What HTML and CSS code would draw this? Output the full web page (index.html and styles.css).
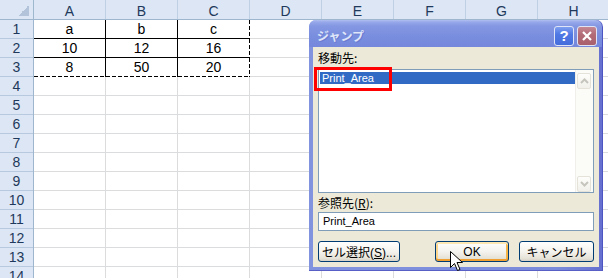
FILE: index.html
```html
<!DOCTYPE html>
<html lang="ja">
<head>
    <meta charset="UTF-8">
    <title>ジャンプ</title>
    <link rel="stylesheet" href="styles.css">
</head>
<body>
    <div class="sheet">
        <div class="corner"></div>
        <div class="col-heads">
            <span>A</span><span>B</span><span>C</span><span>D</span>
            <span>E</span><span>F</span><span>G</span><span>H</span>
        </div>
        <div class="row-heads">
            <span>1</span><span>2</span><span>3</span><span>4</span><span>5</span>
            <span>6</span><span>7</span><span>8</span><span>9</span><span>10</span>
            <span>11</span><span>12</span><span>13</span><span>14</span>
        </div>
        <div class="cells">
            <div class="data">
                <span>a</span><span>b</span><span class="edge-r">c</span>
                <span>10</span><span>12</span><span class="edge-r">16</span>
                <span class="edge-b">8</span><span class="edge-b">50</span><span class="edge-r edge-b">20</span>
            </div>
        </div>
    </div>

    <!-- ジャンプ ダイアログ -->
    <div class="dialog">
        <div class="titlebar">
            <span class="title">ジャンプ</span>
            <span class="tbtn help">?</span>
            <span class="tbtn close">
                <svg width="12" height="12" viewBox="0 0 12 12"><path d="M2 2 L10 10 M10 2 L2 10" stroke="#fff" stroke-width="2.2" fill="none"/></svg>
            </span>
        </div>
        <div class="client">
            <div class="label">移動先:</div>
            <div class="listbox">
                <div class="items">
                    <div class="item selected">Print_Area</div>
                </div>
                <div class="scrollbar">
                    <span class="sbtn">
                        <svg width="9" height="6" viewBox="0 0 9 6"><path d="M1 5 L4.5 1.5 L8 5" stroke="#c6c5bd" stroke-width="2" fill="none"/></svg>
                    </span>
                    <span class="sbtn">
                        <svg width="9" height="6" viewBox="0 0 9 6"><path d="M1 1 L4.5 4.5 L8 1" stroke="#c6c5bd" stroke-width="2" fill="none"/></svg>
                    </span>
                </div>
            </div>
            <div class="label">参照先(<u>R</u>):</div>
            <div class="textbox">Print_Area</div>
            <div class="buttons">
                <button class="btn select">セル選択(<u>S</u>)...</button>
                <button class="btn ok">OK</button>
                <button class="btn cancel">キャンセル</button>
            </div>
            <div class="mark"></div>
        </div>
    </div>

    <svg class="cursor" width="14" height="22" viewBox="0 0 14 22">
        <path d="M0.5 0.5 V16.5 L4.5 12.5 L7.5 19.5 L10 18.5 L7 11.5 H12.5 Z" fill="#fff" stroke="#000" stroke-width="1" stroke-linejoin="miter"/>
    </svg>
</body>
</html>
```

FILE: styles.css
```css
* {
    margin: 0;
    padding: 0;
    box-sizing: border-box;
}

body {
    width: 608px;
    height: 278px;
    overflow: hidden;
    position: relative;
    background: #ffffff;
    font-family: "Liberation Sans", "Noto Sans CJK JP", sans-serif;
    color: #000000;
}

/* シート */
.sheet {
    display: grid;
    grid-template-columns: 34px 576px;
    grid-template-rows: 20px 266px;
}

.corner {
    background: linear-gradient(to top left, #b3c3d9 50%, transparent 50%) right 4px bottom 3px / 11px 11px no-repeat, #dce6f4;
    border-right: 1px solid #9eb6ce;
    border-bottom: 1px solid #9eb6ce;
}

.col-heads {
    display: flex;
    background: #dce6f4;
    border-bottom: 1px solid #9eb6ce;
}

.col-heads span {
    flex: none;
    width: 72px;
    border-right: 1px solid #c0d0e4;
    text-align: center;
    font-size: 14px;
    line-height: 16px;
    padding-top: 3px;
    color: #1e395b;
}

.row-heads {
    display: flex;
    flex-direction: column;
    background: #dce6f4;
    border-right: 1px solid #9eb6ce;
}

.row-heads span {
    flex: none;
    height: 19px;
    border-bottom: 1px solid #b7c9df;
    text-align: center;
    font-size: 14px;
    line-height: 18px;
    color: #1e395b;
}

.cells {
    background-image:
        linear-gradient(to right, transparent 71px, #dadcdd 71px),
        linear-gradient(to bottom, transparent 18px, #dadcdd 18px);
    background-size: 72px 19px;
}

.data {
    display: grid;
    grid-template-columns: repeat(3, 72px);
    grid-auto-rows: 19px;
    width: 216px;
}

.data span {
    border-right: 1px solid #000000;
    border-bottom: 1px solid #000000;
    text-align: center;
    font-size: 14px;
    line-height: 17px;
    padding-top: 1px;
    background: #ffffff;
}

/* 印刷範囲の破線 */
.data .edge-r {
    border-right: none;
    padding-right: 1px;
    background:
        repeating-linear-gradient(to bottom, #000 0 4px, transparent 4px 6px) right top / 1px 100% no-repeat,
        #ffffff;
}

.data .edge-b {
    border-bottom: none;
    background:
        repeating-linear-gradient(to right, #000 0 4px, transparent 4px 6px) left bottom / 100% 1px no-repeat,
        #ffffff;
}

.data .edge-r.edge-b {
    background:
        repeating-linear-gradient(to bottom, #000 0 4px, transparent 4px 6px) right top / 1px 100% no-repeat,
        repeating-linear-gradient(to right, #000 0 4px, transparent 4px 6px) left bottom / 100% 1px no-repeat,
        #ffffff;
}

/* ダイアログ */
.dialog {
    position: absolute;
    left: 309px;
    top: 20px;
    width: 294px;
    height: 251px;
    display: flex;
    flex-direction: column;
    background: linear-gradient(to right, #8193de, #7a8bdb 85%, #6670cf);
    border-radius: 7px 7px 0 0;
    border-right: 1px solid #4d55c2;
    border-bottom: 1px solid #5860c6;
}

.titlebar {
    height: 27px;
    flex: none;
    display: flex;
    align-items: center;
    gap: 3px;
    padding: 4px 5px 0 8px;
    border-radius: 7px 7px 0 0;
    background: linear-gradient(to bottom, #b2c0f0 0, #97a8ea 2px, #8497e2 6px, #7a8edf 16px, #7487db 100%);
}

.title {
    flex: 1;
    font-family: "Noto Sans CJK JP", sans-serif;
    font-size: 12px;
    font-weight: bold;
    color: #dfe6f9;
    text-shadow: 1px 1px 0 #6a7ad0;
}

.tbtn {
    width: 20px;
    height: 20px;
    flex: none;
    display: flex;
    align-items: center;
    justify-content: center;
    border: 1px solid #dfe5f7;
    border-radius: 3px;
    color: #ffffff;
    font-family: "Liberation Sans", sans-serif;
    font-weight: bold;
    font-size: 15px;
}

.help {
    background: linear-gradient(to bottom, #7e9ef0, #5079e4 40%, #446ddc);
}

.close {
    background: linear-gradient(to bottom, #c48894, #b26c78 40%, #a8606c);
}

.client {
    flex: 1;
    position: relative;
    display: flex;
    flex-direction: column;
    margin: 0 3px 3px 4px;
    padding: 1px 5px 0;
    background: #ece9d8;
}

.label {
    height: 19px;
    line-height: 19px;
    font-family: "Noto Sans CJK JP", sans-serif;
    font-size: 12px;
}

.label:first-child {
    margin-bottom: 2px;
}

.listbox {
    height: 124px;
    display: flex;
    border: 1px solid #7f9db9;
    background: #ffffff;
}

.items {
    flex: 1;
    padding: 2px 0 0 1px;
}

.item {
    height: 12px;
    line-height: 12px;
    font-size: 11px;
    padding-left: 2px;
}

.item.selected {
    background: #316ac5;
    color: #ffffff;
}

.scrollbar {
    width: 18px;
    display: flex;
    flex-direction: column;
    justify-content: space-between;
    padding: 3px 2px 0 1px;
    background: #fbfbf8;
    border-left: 1px solid #f0efea;
}

.sbtn {
    height: 16px;
    display: flex;
    align-items: center;
    justify-content: center;
    border: 1px solid #e4e2d9;
    border-radius: 2px;
    background: linear-gradient(to bottom, #fdfdfb, #f1f0ea);
}

.textbox {
    height: 19px;
    border: 1px solid #7f9db9;
    background: #ffffff;
    padding-left: 4px;
    font-size: 11px;
    line-height: 17px;
}

.buttons {
    display: flex;
    gap: 10px;
    margin-top: 10px;
}

.btn {
    height: 21px;
    border: 1px solid #003c74;
    border-radius: 3px;
    background: linear-gradient(to bottom, #ffffff, #f4f3ee 50%, #e6e3d8 85%, #d6d0c5);
    font-family: "Liberation Sans", "Noto Sans CJK JP", sans-serif;
    font-size: 12px;
    white-space: nowrap;
    color: #000000;
}

.select {
    width: 82px;
    margin-right: auto;
}

.ok {
    width: 74px;
    box-shadow: inset 0 2px 0 #fde7b3, inset 0 -2px 0 #f0a030, inset 2px 0 0 #fbd58c, inset -2px 0 0 #f5b548;
}

.cancel {
    width: 75px;
}

/* 赤枠の強調 */
.mark {
    position: absolute;
    left: 1px;
    top: 20px;
    width: 78px;
    height: 24px;
    border: 3px solid #ff0000;
}

.cursor {
    position: absolute;
    left: 450px;
    top: 251px;
}
```
